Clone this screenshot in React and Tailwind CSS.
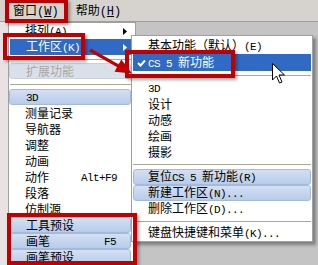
import React from "react";

const ASC = "font-['Liberation_Mono',monospace] text-[11px] tracking-[-0.6px]";

function T({ s, ascii = ASC }) {
  const parts = s.match(/[\x00-\x7F]+|[^\x00-\x7F]+/g) || [];
  return (
    <span className="whitespace-pre">
      {parts.map((p, i) =>
        /^[\x00-\x7F]/.test(p) ? (
          <span key={i} className={ascii}>
            {p}
          </span>
        ) : (
          <span key={i}>{p}</span>
        )
      )}
    </span>
  );
}

const Tri = ({ white }) => (
  <svg width="4" height="7" viewBox="0 0 4 7" className="block">
    <path d="M0 0L4 3.5L0 7Z" fill={white ? "#ffffff" : "#000000"} />
  </svg>
);

const LIGHT =
  "rounded-[3px] border border-[#a3badf] bg-linear-to-b from-[#d3e0f3] to-[#b8cbe9]";

function R1({ label, shortcut, arrow, v }) {
  let cls =
    "h-[16px] shrink-0 mr-[4px] flex items-center justify-between pl-[16px] leading-[16px] ";
  cls += arrow ? "pr-[4px] " : "pr-[14px] ";
  if (v === "blue") cls += "bg-[#316ac5] text-white ml-[1px] pl-[15px]";
  else if (v === "light") cls += LIGHT + " pl-[15px]";
  else if (v === "dis") cls += "rounded-[3px] border border-[#c9d2de] bg-[#d9e0ea] text-[#a7a7a7] pl-[15px]";
  else cls += "text-black";
  return (
    <div className={cls}>
      <T s={label} />
      {shortcut && <T s={shortcut} />}
      {arrow && <Tri white={v === "blue"} />}
    </div>
  );
}

function R2({ label, v, check }) {
  let cls = "h-[16px] shrink-0 mx-[1px] flex items-center leading-[16px] ";
  if (v === "blue") cls += "bg-[#316ac5] text-white h-[17px] pl-[4px]";
  else if (v === "light") cls += LIGHT + " pl-[14px]";
  else cls += "text-black pl-[15px]";
  return (
    <div className={cls}>
      {check && (
        <span className="w-[11px] flex items-center">
          <svg width="9" height="8" viewBox="0 0 9 8" className="block">
            <path d="M1 4 L3.5 6.5 L8 1.5" stroke="#ffffff" strokeWidth="2" fill="none" />
          </svg>
        </span>
      )}
      <T s={label} />
    </div>
  );
}

const Sep = ({ h, mx = "mx-[1px]", cls = "" }) => (
  <div className={`${h} shrink-0 flex flex-col justify-center ${cls}`}>
    <div className={`h-px bg-[#aca899] ${mx}`} />
  </div>
);

const RedBox = ({ cls }) => (
  <div
    className={`absolute border-[4px] border-[#c00000] shadow-[2px_2px_3px_rgba(0,0,0,0.35)] ${cls}`}
  />
);

export default function App() {
  return (
    <div className="relative w-[318px] h-[265px] overflow-hidden bg-[#c4c4c4] font-['Noto_Sans_CJK_SC',sans-serif] text-[12px] text-black select-none">
      {/* menu bar */}
      <div className="h-[22px] bg-[#d6d3ce] border-b border-[#9d9d9d] flex items-center pl-[13px] gap-[17px] leading-[16px]">
        <span className="whitespace-pre">
          窗口
          <span className="font-['Liberation_Mono',monospace] text-[12px]">
            (<span className="underline">W</span>)
          </span>
        </span>
        <span className="whitespace-pre">
          帮助
          <span className="font-['Liberation_Mono',monospace] text-[12px]">
            (<span className="underline">H</span>)
          </span>
        </span>
      </div>
      <div className="flex h-[243px]">
        <div className="w-[8px] bg-[#e8e2e2]" />
        <div className="flex-1 bg-[#c4c4c4]" />
      </div>

      {/* first menu */}
      <div className="absolute left-[8px] top-[22px] w-[128px] h-[252px] bg-white border border-[#a0a0a0] flex flex-col">
        <R1 label="排列(A)" arrow />
        <R1 label="工作区(K)" arrow v="blue" />
        <Sep h="h-[8px]" mx="ml-[1px] mr-[4px]" />
        <R1 label="扩展功能" v="dis" />
        <Sep h="h-[10px]" mx="ml-[1px] mr-[4px]" />
        <R1 label="3D" v="light" />
        <R1 label="测量记录" />
        <R1 label="导航器" />
        <R1 label="调整" />
        <R1 label="动画" />
        <R1 label="动作" shortcut="Alt+F9" />
        <R1 label="段落" />
        <R1 label="仿制源" />
        <R1 label="工具预设" v="light" />
        <R1 label="画笔" shortcut="F5" v="light" />
        <R1 label="画笔预设" v="light" />
      </div>

      {/* submenu */}
      <div className="absolute left-[131px] top-[35px] w-[182px] h-[207px] bg-white border border-[#a0a0a0] shadow-[3px_3px_3px_rgba(0,0,0,0.35)] flex flex-col pt-[2px]">
        <R2 label="基本功能（默认）(E)" />
        <R2 label="CS 5 新功能" v="blue" check />
        <Sep h="h-[9px]" />
        <R2 label="3D" />
        <R2 label="设计" />
        <R2 label="动感" />
        <R2 label="绘画" />
        <R2 label="摄影" />
        <Sep h="h-[9px]" />
        <R2 label="复位CS 5 新功能(R)" v="light" />
        <R2 label="新建工作区(N)..." v="light" />
        <R2 label="删除工作区(D)..." />
        <Sep h="h-[8px]" />
        <R2 label="键盘快捷键和菜单(K)..." />
      </div>

      {/* annotation boxes */}
      <RedBox cls="left-[5px] top-[-1px] w-[63px] h-[24px]" />
      <RedBox cls="left-[3px] top-[33px] w-[82px] h-[27px]" />
      <RedBox cls="left-[125px] top-[50px] w-[110px] h-[28px]" />
      <RedBox cls="left-[7px] top-[213px] w-[130px] h-[52px]" />

      {/* arrow + cursor */}
      <svg className="absolute inset-0 pointer-events-none" width="318" height="265" viewBox="0 0 318 265">
        <line x1="90" y1="50" x2="119" y2="66.3" stroke="#c00000" strokeWidth="3.2" />
        <polygon points="132,73.5 114.5,71.8 121.3,59.6" fill="#c00000" />
        <path
          d="M272.5 63.5 L272.5 80 L276.5 76 L279.5 83 L282 82 L279 75 L284.5 75 Z"
          fill="#ffffff"
          stroke="#000000"
          strokeWidth="1"
          strokeLinejoin="miter"
        />
      </svg>
    </div>
  );
}
